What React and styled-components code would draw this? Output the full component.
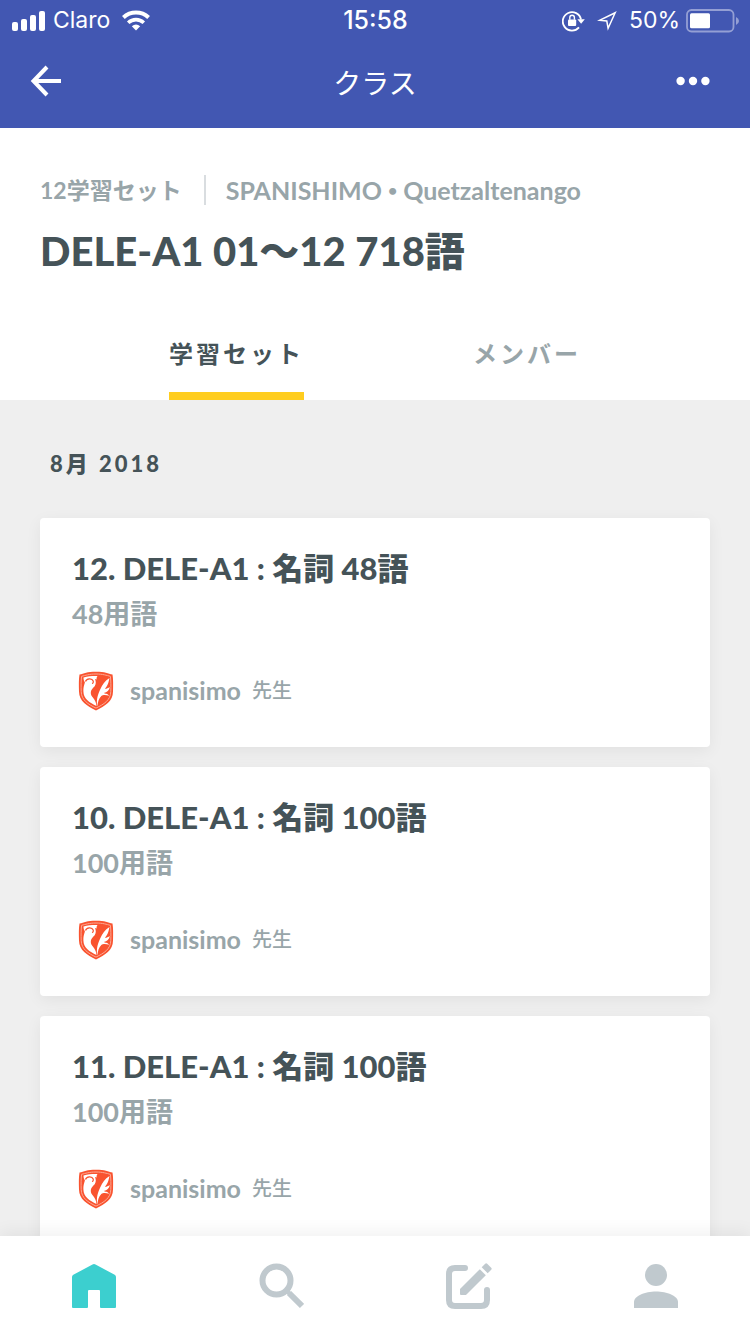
import styled, { createGlobalStyle } from "styled-components";

const GlobalStyle = createGlobalStyle`
  * {
    box-sizing: border-box;
  }
  body {
    margin: 0;
    font-family: Lato, "Noto Sans CJK JP", sans-serif;
    color: #455358;
    background-color: #efefef;
  }
  button {
    border: none;
    padding: 0;
    background: none;
    font: inherit;
    color: inherit;
    cursor: pointer;
  }
  h1, h2, h3, p, ul {
    margin: 0;
    padding: 0;
    font-weight: inherit;
  }
`;

const Container = styled.div`
  display: flex;
  flex-direction: column;
  height: 100vh;
`;

const Top = styled.header`
  flex-shrink: 0;
  color: white;
  background-color: #4257b2;
`;

const StatusBar = styled.div`
  display: grid;
  grid-template-columns: 1fr auto 1fr;
  align-items: center;
  height: 40px;
  padding: 1px 11px 0 12px;
  font-family: Inter, sans-serif;
  font-size: 23px;
  line-height: 39px;
`;

const StatusGroup = styled.div`
  display: flex;
  align-items: center;
  justify-content: ${(props) => (props.$end ? "flex-end" : "flex-start")};
  gap: ${(props) => (props.$end ? "6px" : "8px")};
`;

const Carrier = styled.span`
  margin-right: 4px;
`;

const Clock = styled.span`
  font-size: 25px;
  font-weight: 500;
`;

const Locks = styled.span`
  display: flex;
  align-items: center;
  gap: 12px;
  margin-right: 6px;
`;

const NavBar = styled.nav`
  display: grid;
  grid-template-columns: 1fr auto 1fr;
  align-items: center;
  height: 88px;
  padding: 0 30px 6px;
`;

const NavTitle = styled.h1`
  padding-top: 4px;
  font-size: 28px;
  line-height: 40px;
`;

const NavButton = styled.button`
  display: flex;
  justify-self: ${(props) => (props.$end ? "end" : "start")};
  padding-right: ${(props) => (props.$end ? "10px" : "0")};
`;

const Intro = styled.section`
  flex-shrink: 0;
  padding-top: 42px;
  background-color: white;
`;

const Meta = styled.div`
  display: flex;
  align-items: center;
  height: 40px;
  padding: 0 40px;
  font-weight: 700;
  color: #98a5a9;
`;

const SetCount = styled.span`
  font-size: 23px;
  line-height: 30px;
`;

const School = styled.span`
  display: flex;
  align-items: center;
  gap: 6px;
  height: 30px;
  margin-left: 22px;
  padding-left: 20px;
  border-left: 2px solid #d9dde0;
  font-size: 25px;
  line-height: 30px;
`;

const Bullet = styled.span`
  font-size: 16px;
`;

const Title = styled.h2`
  height: 80px;
  padding: 0 40px;
  font-size: 40px;
  font-weight: 900;
  line-height: 82px;
  white-space: nowrap;
`;

const Tabs = styled.div`
  display: flex;
  justify-content: space-evenly;
  height: 110px;
  padding-top: 18px;
`;

const Tab = styled.button`
  padding-top: 8px;
  border-bottom: 8px solid ${(props) => (props.$active ? "#ffcd1f" : "transparent")};
  font-size: 24px;
  font-weight: 700;
  letter-spacing: 3px;
  line-height: 48px;
  color: ${(props) => (props.$active ? "#455358" : "#98a5a9")};
`;

const List = styled.main`
  flex: 1;
  min-height: 0;
  overflow-y: auto;
  scrollbar-width: none;
  padding: 40px;
`;

const Month = styled.h3`
  padding: 0 10px;
  margin-bottom: 30px;
  font-size: 22px;
  font-weight: 900;
  letter-spacing: 3px;
  line-height: 48px;
`;

const Cards = styled.ul`
  display: flex;
  flex-direction: column;
  gap: 20px;
  list-style: none;
`;

const Card = styled.li`
  padding: 27px 32px 33px;
  border-radius: 4px;
  background-color: white;
  box-shadow: 0 4px 16px rgba(0, 0, 0, 0.06);
`;

const CardTitle = styled.h3`
  font-size: 31px;
  font-weight: 900;
  line-height: 46px;
`;

const Terms = styled.p`
  font-size: 27px;
  font-weight: 700;
  line-height: 46px;
  color: #98a5a9;
`;

const Author = styled.div`
  display: flex;
  align-items: center;
  height: 49px;
  margin-top: 28px;
  color: #98a5a9;
`;

const UserName = styled.span`
  margin: 0 11px 0 10px;
  font-size: 25px;
  font-weight: 700;
  line-height: 30px;
`;

const Role = styled.span`
  font-size: 20px;
  font-weight: 500;
  line-height: 30px;
`;

const TabBar = styled.nav`
  display: grid;
  grid-template-columns: repeat(4, 1fr);
  flex-shrink: 0;
  height: 98px;
  padding-top: 2px;
  background-color: white;
  box-shadow: 0 -4px 16px rgba(0, 0, 0, 0.06);
  z-index: 1;
`;

const TabBarButton = styled.button`
  display: flex;
  align-items: center;
  justify-content: center;
  color: ${(props) => (props.$active ? "#3ccfcf" : "#c0c9ce")};
`;

const SignalIcon = () => (
  <svg width="33" height="20" fill="currentColor">
    <rect x="0" y="11" width="6" height="9" rx="2" />
    <rect x="9" y="8" width="6" height="12" rx="2" />
    <rect x="18" y="4" width="6" height="16" rx="2" />
    <rect x="27" y="0" width="6" height="20" rx="2" />
  </svg>
);

const WifiIcon = () => (
  <svg width="28" height="21" viewBox="0 0 28 21" fill="none" stroke="currentColor" strokeWidth="4">
    <path d="M1.4 7.5a18.5 18.5 0 0 1 25.2 0" />
    <path d="M6.200 12.700a11.500 11.500 0 0 1 15.600 0" strokeWidth="3.600" />
    <path d="M9.800 16.200a6.500 6.500 0 0 1 8.400 0L14 20.400z" fill="currentColor" stroke="none" />
  </svg>
);

const RotationLockIcon = () => (
  <svg width="23" height="22" viewBox="0 0 23 22" fill="none" stroke="currentColor" strokeWidth="1.8">
    <path d="M17 17.300A9.200 9.200 0 1 1 19 9.500" />
    <path d="M15.400 9.300h7.400l-3.700 4.400z" fill="currentColor" stroke="none" />
    <rect x="6" y="9.400" width="8.200" height="6.600" rx="1" fill="currentColor" stroke="none" />
    <path d="M7.800 9.800V7.600a2.300 2.300 0 0 1 4.600 0v2.200" strokeWidth="1.400" />
  </svg>
);

const LocationIcon = () => (
  <svg width="20" height="20" viewBox="0 0 20 20" fill="none" stroke="currentColor" strokeWidth="1.5">
    <path d="M18.200 1.700 2.500 9.300l7.300.7 1.300 7.300z" />
  </svg>
);

const BatteryIcon = () => (
  <svg width="53" height="24" viewBox="0 0 53 24">
    <rect x="1" y="1" width="46.500" height="21.500" rx="4.500" fill="none" stroke="#949fd4" strokeWidth="1.800" />
    <rect x="4" y="4.200" width="20" height="15" rx="1.500" fill="white" />
    <path d="M50 8q3 1.500 3 4t-3 4z" fill="#949fd4" />
  </svg>
);

const BackIcon = () => (
  <svg width="32" height="32" viewBox="0 0 32 32" fill="none" stroke="currentColor" strokeWidth="4">
    <path d="M17 2 3.500 16 17 30M3 16h28" />
  </svg>
);

const MoreIcon = () => (
  <svg width="34" height="10" fill="currentColor">
    <circle cx="4.600" cy="5" r="4.200" />
    <circle cx="17" cy="5" r="4.200" />
    <circle cx="29.400" cy="5" r="4.200" />
  </svg>
);

const CrestIcon = () => (
  <svg width="48" height="48" viewBox="0 0 48 48">
    <path
      d="M7.500 8.600C12 7.600 15 5.800 24 5.800s12 1.800 16.500 2.800c.8 5 .7 10 .5 17 0 10-8 14.500-17 18.900C15 40.100 7.200 35.600 7 25.600c-.2-7-.3-12 .5-17z"
      fill="#f9532f"
    />
    <path
      d="M9.600 10.300C13.500 9.400 17 8 24 8s10.500 1.400 14.400 2.300c.6 5 .6 9.700.4 15.300-.2 8.600-7 12.700-14.800 16.500-7.800-3.800-14.600-7.900-14.800-16.500-.2-5.600-.2-10.300.4-15.300z"
      fill="none"
      stroke="#fda894"
      strokeWidth="1"
    />
    <path
      d="M11.500 11.600c4.500-1.300 9-1.600 14-1.500-.8 1-1 2-.9 3.400-.6-.3-1-.2-1.600-.5 1 2 1.200 5-.2 7-1.400 2-3.600 3-4 6.500-.5 4.500 5.200 5.500 5.700 13.500-7-3.400-12.900-7-13.100-14.500-.1-4.800 1-7 1.500-9-.9-1.400-1.400-2.600-1.400-4.900z"
      fill="white"
    />
    <path d="M13.500 15.500c1-3.200 6.500-3.800 7.700-.5.400 1.300-.2 2.300-1.200 2.500" fill="none" stroke="#f9532f" strokeWidth="1.200" />
    <path
      d="M25.200 40.500c-1-7 .6-12 3.100-17.300 2-4.300 4.600-8.300 9.200-11.200-1 4.400-1.500 7.500-4.600 10.700 1.900 0 3.300-.3 4.900-1.700-.5 3.500-2.800 5.300-6 5.900 1.300 1 4 .3 5.200 2.800-2.300-.4-5.600-1.300-7.700.4-2.500 2.200-3.200 5.700-4.100 10.400z"
      fill="white"
    />
  </svg>
);

const HomeIcon = () => (
  <svg width="44" height="44" viewBox="0 0 44 44" fill="currentColor">
    <path d="M1.300 10.800 20.500.5q1.500-.8 3 0L42.700 10.800Q44 11.600 44 13v30q0 1-1 1H29q-1 0-1-1V27q0-1-1-1H17q-1 0-1 1v16q0 1-1 1H1q-1 0-1-1V13q0-1.400 1.300-2.200z" />
  </svg>
);

const SearchIcon = () => (
  <svg width="46" height="46" viewBox="0 0 46 46" fill="none" stroke="currentColor" strokeWidth="6">
    <circle cx="18.500" cy="17.500" r="14" />
    <path d="m28.500 27.500 4 4" strokeWidth="4" />
    <path d="m31 30 13 13" />
  </svg>
);

const CreateIcon = () => (
  <svg width="46" height="46" viewBox="0 0 46 46" fill="currentColor">
    <path
      d="M19 5H9q-6 0-6 6v26q0 6 6 6h26q6 0 6-6V27"
      fill="none"
      stroke="currentColor"
      strokeWidth="6"
      strokeLinecap="round"
    />
    <path d="M14 26 33.800 6.200l6 6L20.500 31.500q-.8.500-1.500.5h-4q-1 0-1-1z" />
    <path d="m35.700 4.300 3.500-3.500q1-1 2 0l4 4q1 1 0 2l-3.500 3.500z" />
  </svg>
);

const ProfileIcon = () => (
  <svg width="44" height="44" viewBox="0 0 44 44" fill="currentColor">
    <circle cx="22" cy="11" r="11" />
    <path d="M0 44v-6c0-6 11-10.500 22-10.500S44 32 44 38v6z" />
  </svg>
);

const studySets = [
  { id: 12, title: "12. DELE-A1 : 名詞 48語", terms: "48用語" },
  { id: 10, title: "10. DELE-A1 : 名詞 100語", terms: "100用語" },
  { id: 11, title: "11. DELE-A1 : 名詞 100語", terms: "100用語" },
];

const StudySet = ({ item }) => (
  <Card>
    <CardTitle>{item.title}</CardTitle>
    <Terms>{item.terms}</Terms>
    <Author>
      <CrestIcon />
      <UserName>spanisimo</UserName>
      <Role>先生</Role>
    </Author>
  </Card>
);

const App = () => {
  return (
    <Container lang="ja">
      <GlobalStyle />
      <Top>
        <StatusBar>
          <StatusGroup>
            <SignalIcon />
            <Carrier>Claro</Carrier>
            <WifiIcon />
          </StatusGroup>
          <Clock>15:58</Clock>
          <StatusGroup $end>
            <Locks>
              <RotationLockIcon />
              <LocationIcon />
            </Locks>
            <span>50%</span>
            <BatteryIcon />
          </StatusGroup>
        </StatusBar>
        <NavBar>
          <NavButton aria-label="戻る">
            <BackIcon />
          </NavButton>
          <NavTitle>クラス</NavTitle>
          <NavButton $end aria-label="その他">
            <MoreIcon />
          </NavButton>
        </NavBar>
      </Top>
      <Intro>
        <Meta>
          <SetCount>12学習セット</SetCount>
          <School>
            <span>SPANISHIMO</span>
            <Bullet>•</Bullet>
            <span>Quetzaltenango</span>
          </School>
        </Meta>
        <Title>DELE-A1 01〜12 718語</Title>
        <Tabs role="tablist">
          <Tab $active role="tab" aria-selected="true">
            学習セット
          </Tab>
          <Tab role="tab" aria-selected="false">
            メンバー
          </Tab>
        </Tabs>
      </Intro>
      <List>
        <Month>8月 2018</Month>
        <Cards>
          {studySets.map((item) => (
            <StudySet item={item} key={item.id} />
          ))}
        </Cards>
      </List>
      <TabBar>
        <TabBarButton $active aria-label="ホーム">
          <HomeIcon />
        </TabBarButton>
        <TabBarButton aria-label="検索">
          <SearchIcon />
        </TabBarButton>
        <TabBarButton aria-label="作成">
          <CreateIcon />
        </TabBarButton>
        <TabBarButton aria-label="プロフィール">
          <ProfileIcon />
        </TabBarButton>
      </TabBar>
    </Container>
  );
};

export default App;
